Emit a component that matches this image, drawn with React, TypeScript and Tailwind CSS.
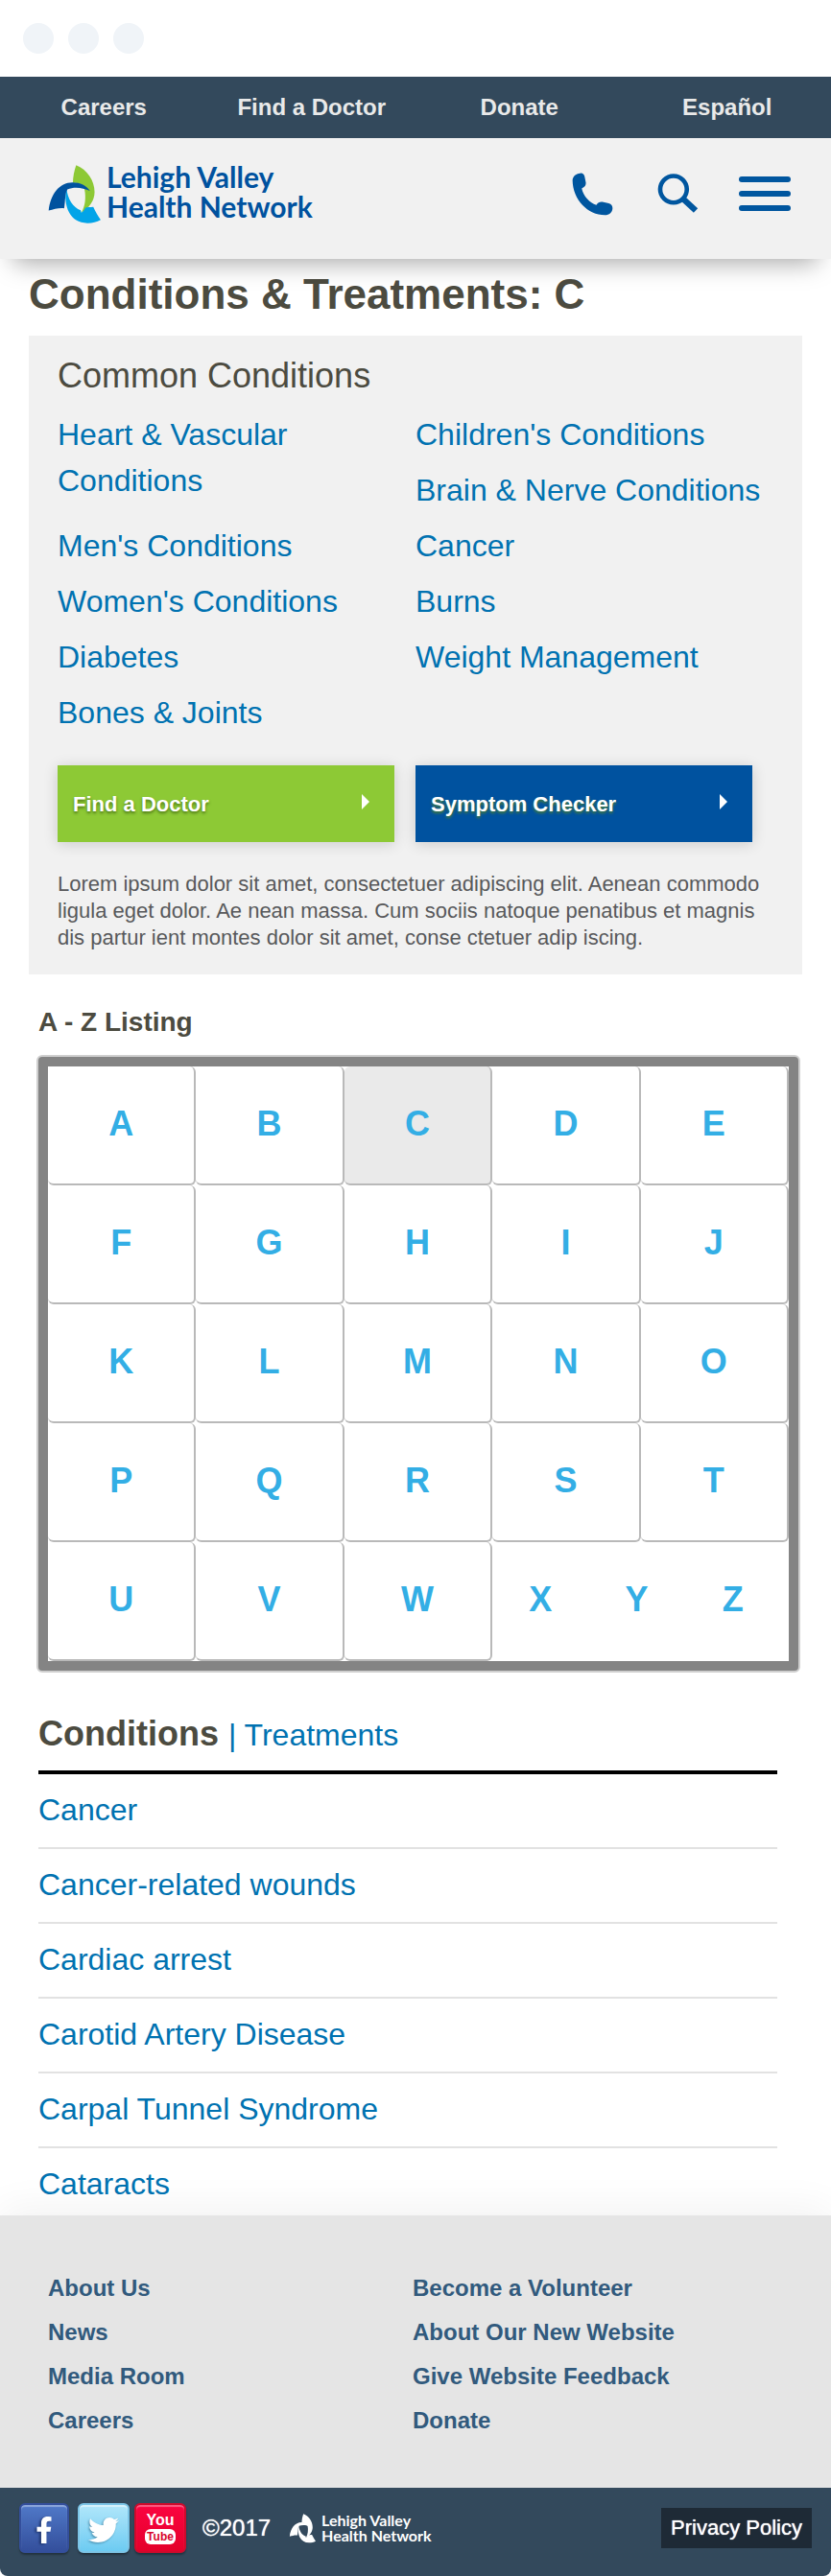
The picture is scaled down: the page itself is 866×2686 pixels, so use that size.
import React from "react";
import { FaFacebookF, FaTwitter } from "react-icons/fa";

const topLinks = ["Careers", "Find a Doctor", "Donate", "Español"];

const commonConditions = [
  "Heart & Vascular Conditions",
  "Children's Conditions",
  "Brain & Nerve Conditions",
  "Men's Conditions",
  "Cancer",
  "Women's Conditions",
  "Burns",
  "Diabetes",
  "Weight Management",
  "Bones & Joints",
];

const letters = "ABCDEFGHIJKLMNOPQRSTUVW".split("");
const lastLetters = ["X", "Y", "Z"];

const conditions = [
  "Cancer",
  "Cancer-related wounds",
  "Cardiac arrest",
  "Carotid Artery Disease",
  "Carpal Tunnel Syndrome",
  "Cataracts",
];

const footerLinks = [
  ["About Us", "Become a Volunteer"],
  ["News", "About Our New Website"],
  ["Media Room", "Give Website Feedback"],
  ["Careers", "Donate"],
];

function Emblem({ className, mono = false }: { className: string; mono?: boolean }) {
  return (
    <svg viewBox="0 0 166 190" className={className} aria-hidden="true">
      <path
        fill={mono ? "#fff" : "#8dc935"}
        d="M87 7C121 20 144 55 144 90C144 116 127 140 103 154C115 134 118 108 113 82C104 66 92 61 77 62C77 44 81 24 87 7Z"
      />
      <path
        fill={mono ? "#fff" : "#02a4e8"}
        d="M57 76C46 134 68 186 122 186C138 186 151 182 163 176C155 165 147 151 140 136C129 137 121 137 116 138C113 144 109 150 103 154L101 146C78 139 60 112 57 76Z"
      />
      <path
        fill={mono ? "#fff" : "#00529f"}
        d="M2 147C7 98 34 60 76 60C100 60 118 70 130 86C108 77 82 72 60 82C52 94 54 116 50 140C34 138 18 143 2 147Z"
      />
    </svg>
  );
}

function ActionButton({ label, tone }: { label: string; tone: string }) {
  return (
    <button
      type="button"
      className={`flex h-20 flex-1 items-center justify-between pr-[26px] pl-4 text-left text-[22px] font-bold text-white shadow-[0_2px_14px_rgba(0,0,0,0.16)] ${tone}`}
    >
      <span>{label}</span>
      <svg viewBox="0 0 8 16" className="mb-1 h-4 w-2" aria-hidden="true">
        <path d="M0 0L8 8L0 16Z" fill="#fff" />
      </svg>
    </button>
  );
}

export default function App() {
  return (
    <div className="bg-white font-['Liberation_Sans',Arial,sans-serif]">
      <div className="flex h-20 items-center gap-[15px] px-6">
        <span className="size-8 rounded-full bg-[#f0f4f8]" />
        <span className="size-8 rounded-full bg-[#f0f4f8]" />
        <span className="size-8 rounded-full bg-[#f0f4f8]" />
      </div>

      <nav className="grid h-16 grid-cols-4 items-center bg-[#33495c] text-center text-2xl font-bold text-[#e9e9e9]">
        {topLinks.map((t) => (
          <a key={t} href="#">
            {t}
          </a>
        ))}
      </nav>

      <header className="relative z-10 flex h-[126px] items-center justify-between bg-[#f1f1f1] pr-[42px] pb-[10px] pl-[50px] shadow-[0_18px_24px_-14px_rgba(0,0,0,0.35)]">
        <a href="#" className="flex items-center gap-[5px]">
          <Emblem className="h-16 w-14" />
          <span className="flex flex-col pb-1 font-['Lato',sans-serif] text-[30px] leading-[31px] font-bold text-[#00529f]">
            <span>Lehigh Valley</span>
            <span>Health Network</span>
          </span>
        </a>
        <div className="flex items-center gap-[42px]">
          <button type="button" aria-label="Call" className="mr-1">
            <svg viewBox="0 0 130 136" className="h-[45px] w-[43px]">
              <path
                fill="#00569f"
                d="M26 2C34 1 38 5 40 12L44 32C45 40 40 46 31 50C36 75 56 95 77 102C82 94 88 91 96 92L116 97C124 99 129 106 128 114C126 126 118 133 104 134C50 134 3 85 2 25C2 12 12 3 26 2Z"
              />
            </svg>
          </button>
          <button type="button" aria-label="Search">
            <svg viewBox="0 0 130 126" className="h-[42px] w-[43px]" fill="none" stroke="#00569f">
              <circle cx="51" cy="49" r="42" strokeWidth="14" />
              <path d="M80 78L121 116" strokeWidth="19" />
            </svg>
          </button>
          <button type="button" aria-label="Menu" className="flex flex-col gap-[9px]">
            <span className="h-1.5 w-[54px] rounded-full bg-[#00569f]" />
            <span className="h-1.5 w-[54px] rounded-full bg-[#00569f]" />
            <span className="h-1.5 w-[54px] rounded-full bg-[#00569f]" />
          </button>
        </div>
      </header>

      <main>
        <section className="px-[30px] pt-[9px]">
          <h1 className="text-[44px] leading-14 font-bold text-[#4c4b40]">Conditions &amp; Treatments: C</h1>
          <div className="mt-[15px] bg-[#f1f1f1] px-[30px] pt-5 pb-6">
            <h2 className="text-4xl leading-11 text-[#4c4b40]">Common Conditions</h2>
            <ul className="mt-[15px] grid grid-flow-dense grid-cols-2 gap-y-[10px] text-[32px] leading-12 text-[#0072b1]">
              {commonConditions.map((c, i) => (
                <li key={c} className={i === 0 ? "row-span-2" : ""}>
                  <a href="#">{c}</a>
                </li>
              ))}
            </ul>
            <div className="mt-[31px] mr-[22px] flex gap-[22px]">
              <ActionButton
                label="Find a Doctor"
                tone="bg-[#8dc935] [text-shadow:0_2px_3px_rgba(70,110,20,0.9)]"
              />
              <ActionButton
                label="Symptom Checker"
                tone="bg-[#00529f] [text-shadow:0_2px_3px_rgba(80,130,40,0.9)]"
              />
            </div>
            <p className="mt-[30px] text-[22px] leading-7 text-[#58595b]">
              Lorem ipsum dolor sit amet, consectetuer adipiscing elit. Aenean commodo ligula eget dolor. Ae nean
              massa. Cum sociis natoque penatibus et magnis dis partur ient montes dolor sit amet, conse ctetuer
              adip iscing.
            </p>
          </div>
        </section>

        <section className="mt-8 pr-8 pl-[38px]">
          <h2 className="pl-0.5 text-[28px] leading-9 font-bold text-[#4c4b40]">A - Z Listing</h2>
          <div className="mt-4 rounded-md border-2 border-[#cfcfcf] bg-[#848484] p-[10px]">
            <div className="grid grid-cols-5 bg-white text-4xl font-bold text-[#33aee5]">
              {letters.map((l) => (
                <a
                  key={l}
                  href="#"
                  className={`flex h-[124px] items-center justify-center rounded-md border-r-2 border-b-2 border-[#b9b9b9] pb-0.5 ${
                    l === "C" ? "bg-[#eaeaea]" : ""
                  }`}
                >
                  {l}
                </a>
              ))}
              <div className="col-span-2 grid grid-cols-3 items-center pr-2 pb-1 text-center">
                {lastLetters.map((l) => (
                  <a key={l} href="#">
                    {l}
                  </a>
                ))}
              </div>
            </div>
          </div>
        </section>

        <section className="mt-10 pr-14 pl-10 text-[32px] leading-12 text-[#0072b1]">
          <div className="flex items-baseline gap-[10px] border-b-4 border-black pb-[13px]">
            <h2 className="text-4xl leading-12 font-bold text-[#4c4b40]">Conditions</h2>
            <a href="#">| Treatments</a>
          </div>
          <ul>
            {conditions.map((c) => (
              <li key={c} className="border-b-2 border-[#e2e2e2] pt-[13px] pb-[15px] last:border-b-0 last:pb-[9px]">
                <a href="#">{c}</a>
              </li>
            ))}
          </ul>
        </section>
      </main>

      <footer>
        <div className="bg-[#e5e5e5] pt-[53px] pr-14 pb-[47px] pl-[50px] shadow-[0_-6px_40px_rgba(0,0,0,0.06)]">
          <ul className="text-2xl leading-[46px] font-bold text-[#315a7d]">
            {footerLinks.map(([a, b]) => (
              <li key={a} className="grid grid-cols-2">
                <a href="#">{a}</a>
                <a href="#">{b}</a>
              </li>
            ))}
          </ul>
        </div>
        <div className="flex items-center rounded-b-lg bg-[#33495c] px-5 pt-4 pb-6 text-white">
          <a
            href="#"
            aria-label="Facebook"
            className="flex size-[52px] items-center justify-center rounded-md border-2 border-[#344f9c] bg-linear-to-b from-[#5079c8] to-[#344f9c] pt-1 shadow-[0_2px_2px_rgba(0,0,0,0.3),inset_0_2px_1px_rgba(255,255,255,0.35)]"
          >
            <FaFacebookF className="size-7 drop-shadow-[-2px_1px_1px_rgba(20,40,90,0.7)]" />
          </a>
          <a
            href="#"
            aria-label="Twitter"
            className="ml-[9px] flex h-[52px] w-[54px] items-center justify-center rounded-md border-2 border-[#7cc4e6] bg-linear-to-b from-[#b0e6fa] to-[#6ccbf2] pt-1 shadow-[0_2px_2px_rgba(0,0,0,0.3),inset_0_2px_1px_rgba(255,255,255,0.5)]"
          >
            <FaTwitter className="size-8 drop-shadow-[-1px_1px_1px_rgba(50,110,140,0.7)]" />
          </a>
          <a
            href="#"
            aria-label="YouTube"
            className="ml-[5px] flex h-[52px] w-[54px] flex-col items-center justify-center rounded-md border-2 border-[#cf0a2c] bg-linear-to-b from-[#fb0440] to-[#e4002b] font-bold shadow-[0_2px_2px_rgba(0,0,0,0.3),inset_0_2px_1px_rgba(255,255,255,0.35)]"
          >
            <span className="text-base leading-[18px]">You</span>
            <span className="rounded-md bg-white px-0.5 text-xs leading-4 text-[#d8062c]">Tube</span>
          </a>
          <span className="ml-[17px] text-2xl [text-shadow:0_0_1px_#fff]">©2017</span>
          <a href="#" className="ml-[18px] flex items-center gap-1">
            <Emblem mono className="h-8 w-[31px]" />
            <span className="flex flex-col font-['Lato',sans-serif] text-base leading-4 font-bold">
              <span>Lehigh Valley</span>
              <span>Health Network</span>
            </span>
          </a>
          <a href="#" className="ml-auto bg-[#1e2a36] px-[10px] text-[22px] leading-[42px] [text-shadow:0_0_1px_#fff]">
            Privacy Policy
          </a>
        </div>
      </footer>
    </div>
  );
}
